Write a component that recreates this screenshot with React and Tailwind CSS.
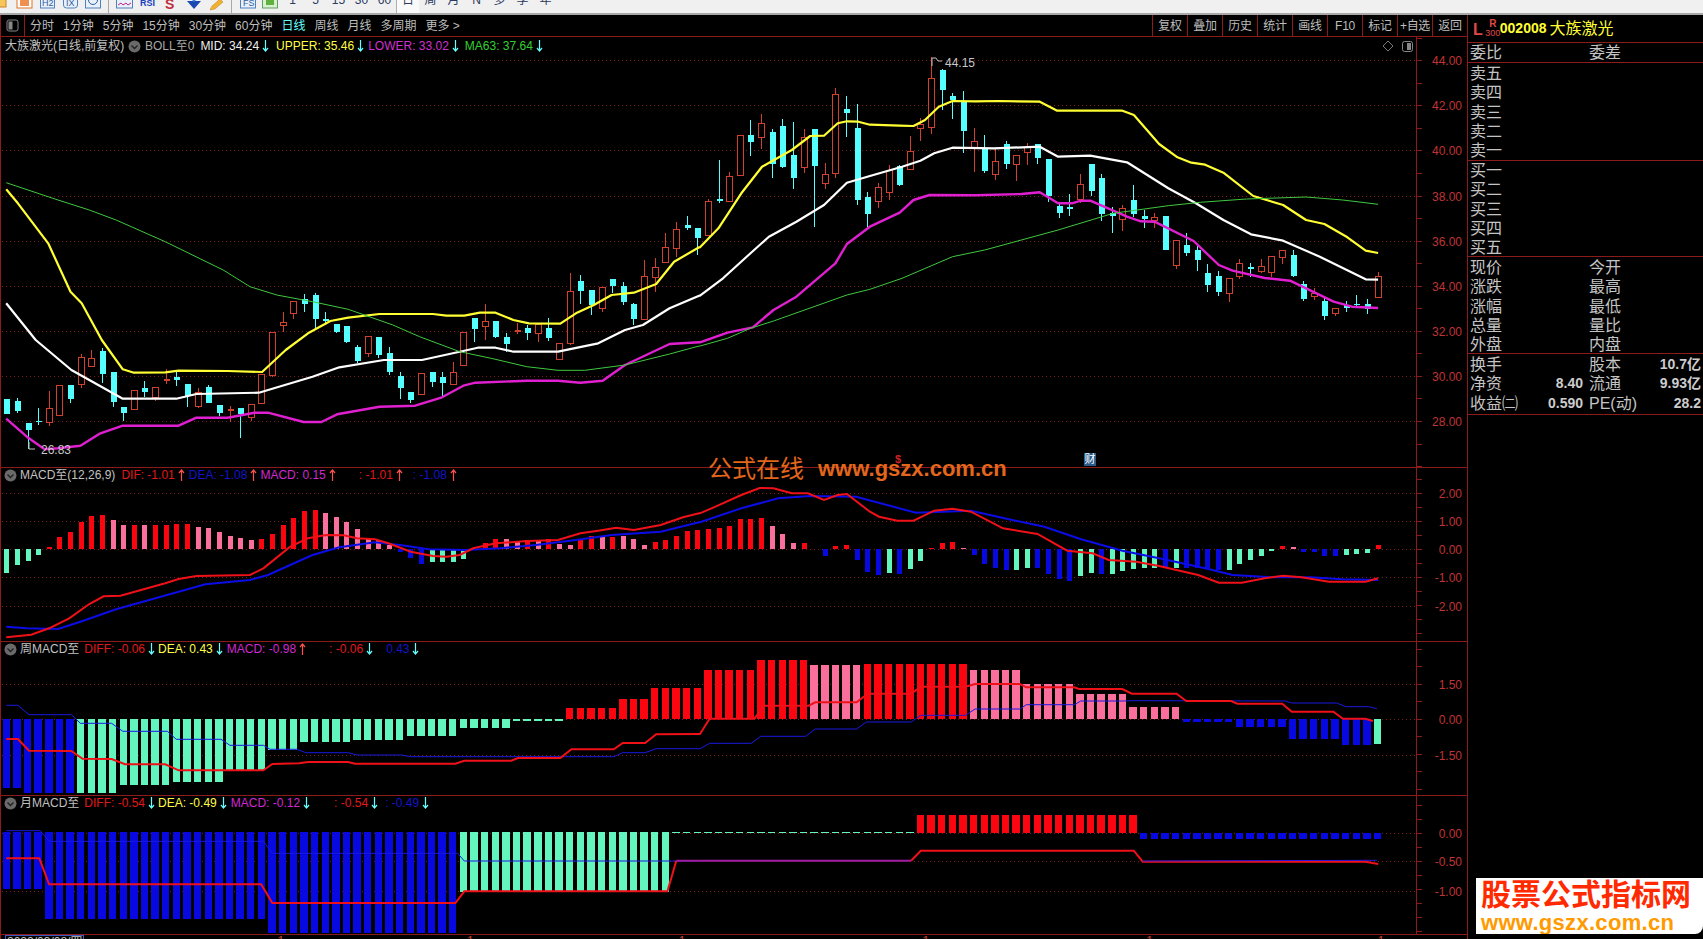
// Stock chart terminal screen. Chart data was read off the screenshot, so most
// numbers are pixels in "zoom" units: x / kx, 40 + y / 3 (main) etc.
const LINE = "#8c1c1c";
const slotX = (i) => 6.3 + 10.63 * i;

const z4x = (x) => x / 2.24;
const z5x = (x) => 700 + x / 2.178;
const z9x = (x) => 700 + x / 1.563;
const pts = (arr, fx, base) => {
  const out = [];
  for (let i = 0; i < arr.length; i += 2) out.push(`${fx(arr[i]).toFixed(1)},${(base + arr[i + 1] / 3).toFixed(1)}`);
  return out.join(" ");
};

// type, wick top, body top, body bottom, wick bottom
const candles = [
  ["c",1077,1077,1122,1122],["c",1075,1083,1112,1118],["c",1150,1150,1169,1228],["c",1105,1143,1147,1155],
  ["r",1053,1105,1145,1158],["r",1036,1036,1124,1124],["c",1036,1036,1076,1088],["r",942,952,1032,1045],
  ["r",930,955,977,977],["c",925,932,1002,1030],["c",996,996,1086,1100],["c",1100,1100,1118,1142],
  ["r",1051,1051,1108,1108],["c",1023,1044,1056,1070],["r",1042,1042,1072,1084],["d",988,1018,1022,1032],
  ["c",995,1012,1019,1038],["c",1033,1033,1068,1100],["r",1045,1056,1097,1105],["c",1036,1042,1088,1088],
  ["c",1095,1095,1118,1128],["d",1098,1108,1112,1145],["c",1105,1105,1122,1193],["r",1093,1093,1132,1143],
  ["r",1003,1003,1090,1090],["r",875,875,1004,1012],["r",816,847,855,875],["r",784,784,820,838],
  ["c",763,778,791,815],["c",760,765,836,870],["c",815,838,843,855],["c",852,852,875,878],
  ["c",858,858,906,908],["c",915,921,963,970],["r",889,889,938,950],["c",892,892,946,955],
  ["c",922,938,995,1005],["c",996,1008,1045,1078],["c",1055,1055,1080,1088],["r",998,998,1063,1063],
  ["c",997,997,1025,1040],["c",995,1011,1029,1068],["r",965,995,1031,1031],["r",877,877,976,976],
  ["c",835,835,866,905],["r",793,844,859,900],["c",843,843,890,895],["c",880,892,911,936],
  ["d",848,871,875,883],["c",855,865,878,900],["r",853,853,880,905],["c",835,865,893,902],
  ["r",910,910,956,956],["r",700,754,908,916],["c",706,724,752,792],["c",750,750,795,825],
  ["r",740,740,805,815],["c",717,717,738,760],["c",727,739,785,795],["c",790,793,836,855],
  ["r",660,709,838,838],["r",655,682,710,755],["r",580,620,665,665],["r",545,568,623,650],
  ["c",528,556,563,570],["c",563,563,595,645],
  ["r",478,483,585,585],["c",360,478,484,490],["r",395,408,482,482],["r",285,285,405,405],
  ["c",240,285,305,348],["r",222,250,292,328],["c",268,276,372,413],["c",238,258,382,385],
  ["c",247,345,413,446],["r",268,292,380,400],["c",267,267,378,560],["r",370,403,428,448],
  ["r",145,163,400,415],["c",168,207,218,290],["c",192,264,480,495],["c",455,472,521,560],
  ["r",430,442,482,505],["r",375,390,455,480],["c",375,378,435,438],["r",288,333,387,390],
  ["r",235,252,265,303],["r",50,115,260,282],["c",88,90,150,210],["c",160,168,180,237],
  ["c",153,185,272,340],["r",265,304,322,395],["c",285,328,393,400],["r",325,364,402,420],
  ["c",303,313,372,387],["r",345,346,373,423],["r",310,320,335,375],["c",313,313,353,372],
  ["c",357,357,468,485],["c",485,498,518,533],["c",462,501,506,528],["r",402,433,476,490],
  ["c",373,373,453,468],["c",403,414,521,543],["c",500,520,527,578],["r",495,505,537,572],
  ["c",435,480,522,530],["c",510,528,538,565],["r",520,532,540,563],["c",528,528,630,630],
  ["r",600,601,675,686],["c",580,615,640,648],["c",618,630,660,693],["c",672,700,735,755],
  ["c",693,708,756,768],["r",715,715,758,785],["r",658,670,707,718],["c",670,680,686,710],
  ["r",657,678,692,698],["r",648,648,695,712],["r",631,631,650,672],["c",630,645,708,710],
  ["c",724,733,777,782],["r",745,758,767,780],["c",775,783,828,840],["r",805,805,820,828],
  ["c",783,795,804,815],["c",765,792,795,800],["c",778,793,808,822],["r",695,708,770,772],
];

const mainLines = [
  ["#ffff33", 2.2,
    [14,448,40,490,108,610,158,755,183,790,228,900,275,988,300,998,370,997,400,992,510,993,587,996,640,930,690,880,740,843,780,833,850,822,970,822,1000,827,1040,827,1075,818,1110,818,1150,840,1185,850,1255,851,1290,820,1330,795,1370,765,1420,758,1470,732,1510,665,1566,622],
    [0,622,40,565,90,460,135,380,200,330,240,288,270,287,300,250,320,244,345,245,370,254,435,257,465,258,490,240,520,200,550,183,600,184,650,183,740,185,778,212,920,212,945,225,1000,312,1040,352,1070,368,1100,374,1140,398,1205,468,1270,495,1320,540,1360,552,1410,592,1450,632,1477,639]],
  ["#ffffff", 2.2,
    [14,790,80,900,160,990,200,1020,275,1076,395,1076,440,1062,580,1058,700,1010,760,982,860,960,945,960,1040,932,1070,923,1110,923,1150,935,1250,935,1340,910,1400,870,1440,855,1500,805,1566,767],
    [0,767,50,715,110,640,150,590,210,545,270,495,320,428,370,408,440,380,480,362,510,340,550,323,640,325,740,320,780,350,850,347,930,367,1020,445,1080,490,1140,540,1200,583,1270,602,1350,650,1450,718,1477,719]],
  ["#e020d0", 2.4,
    [14,1136,60,1190,100,1228,130,1225,180,1217,225,1180,275,1157,400,1157,440,1133,510,1133,570,1118,600,1118,680,1146,720,1146,755,1123,850,1100,930,1097,990,1072,1040,1036,1065,1028,1180,1022,1250,1022,1300,1028,1350,1022,1400,975,1500,912,1566,907],
    [0,907,60,878,115,862,160,810,210,770,295,670,320,612,370,560,435,518,465,480,500,465,600,466,700,462,740,457,780,490,810,490,830,482,850,482,930,530,960,544,990,545,1075,603,1130,675,1160,692,1230,714,1285,722,1320,745,1380,785,1420,800,1477,804]],
  ["#3fc83f", 1,
    [14,428,130,480,200,510,260,540,370,605,500,690,560,740,620,765,700,785,780,808,880,855,940,890,1030,935,1100,955,1180,980,1250,991,1310,991,1400,975,1500,942,1566,918],
    [0,918,60,895,110,865,160,843,320,765,370,748,440,715,550,650,620,630,780,570,900,520,1020,497,1090,487,1190,477,1320,471,1400,480,1477,493]],
];

const BAR = { R: "#fa0510", P: "#fb6f9c", G: "#62f5be", B: "#0808e0" };

const macdBars = (
  "G338 G315 G302 G285 R262 R232 R216 R185 R167 R165 P180 P194 R195 P195 R195 R194 R192 R192 P201 P204 P215 P228 P234 P240 R237 R222 R195 R174 R152 R150 P160 P171 P185 P207 P235 P240 P255 B275 B294 B312 G306 G306 G306 G298 G270 R250 R237 P237 P243 R240 P243 R237 P252 P255 R238 R228 P232 R230 P228 P237 P255 R246 R240 R228 R212 R210 " +
  "R206 R204 R198 R177 R177 R174 P198 P222 P249 R249 P266 B288 R258 R254 B300 B335 B345 G340 B342 G327 G303 R264 R249 R245 P264 B286 B312 B324 B330 G330 G324 B324 B342 B357 B363 G348 G339 B342 G342 G333 G327 G324 G324 B324 G324 B324 B324 B324 B330 G330 G312 G300 G288 G273 R258 P261 B276 B276 B288 B288 G285 G282 G279 R255"
).split(" ");

// colour, how many bars, end of the bar in zoom units (zero line is at 238)
const weekRuns = [
  ["B",2,445],["B",5,458],["G",4,458],["G",5,435],["G",5,425],["G",4,390],["G",3,330],["G",5,305],["G",5,300],["G",5,288],
  ["G",5,264],["G",5,242],["R",5,205],["R",3,177],["R",5,144],["R",5,90],["R",5,60],["P",5,75],["R",5,72],["R",5,72],
  ["P",5,90],["P",5,132],["P",5,162],["P",5,202],["B",5,245],["B",5,262],["B",5,297],["B",3,315],["G",1,312],
];

const monthRuns = [
  ["B",4,575,747],["B",21,575,836],["B",18,575,878],["G",20,575,757],["G",23,576,579],["R",21,525,578],["B",23,578,596],
];

const expand = (runs) => runs.flatMap((r) => Array(r[1]).fill(r));

function Grid({ ys }) {
  return ys.map((y) => (
    <line key={y} x1="2" x2="1416" y1={y} y2={y} stroke="#7a1a1a" strokeDasharray="1 3" shapeRendering="crispEdges" />
  ));
}

function Axis({ top, h, labels, step }) {
  const ticks = [];
  for (let y = labels[0][1] % step; y < top + h; y += step) if (y > top) ticks.push(y);
  return (
    <>
      <line x1="1416.5" x2="1416.5" y1={top} y2={top + h} stroke={LINE} />
      {ticks.map((y) => (
        <line key={y} x1="1417" x2="1422" y1={y} y2={y} stroke={LINE} shapeRendering="crispEdges" />
      ))}
      {labels.map(([t, y]) => (
        <text key={t} x="1462" y={y + 4.5} textAnchor="end" fontSize="12" fill="#c03434">
          {t}
        </text>
      ))}
    </>
  );
}

function Panel({ top, h, children, legend }) {
  return (
    <div className="relative border-b border-[#8c1c1c]">
      <svg width="1466" height={h} viewBox={`1 ${top} 1466 ${h}`} className="block">
        {children}
      </svg>
      {legend}
    </div>
  );
}

function Arrow({ up, className = "" }) {
  return (
    <svg width="7" height="12" viewBox="0 0 7 12" className={`shrink-0 ${className}`}>
      {up ? (
        <path d="M3.5 12V1M1 4l2.5-3L6 4" fill="none" stroke="#ff5050" strokeWidth="1.2" />
      ) : (
        <path d="M3.5 0v11M1 8l2.5 3L6 8" fill="none" stroke="#66ffff" strokeWidth="1.2" />
      )}
    </svg>
  );
}

function Dot() {
  return (
    <svg width="13" height="13" viewBox="0 0 13 13" className="shrink-0">
      <circle cx="6.5" cy="6.5" r="6" fill="#6a6a6a" />
      <path d="M3.5 5.5l3 3 3-3" fill="none" stroke="#222" strokeWidth="1.4" />
    </svg>
  );
}

function Leg({ text, up, className, arrow = "ml-[3px]" }) {
  return (
    <>
      <span className={`whitespace-nowrap ${className}`}>{text}</span>
      <Arrow up={up} className={arrow} />
    </>
  );
}

function MainPanel() {
  return (
    <Panel
      top={37}
      h={430}
      legend={
        <div className="absolute left-[4px] top-[2px] flex h-[14px] items-center text-[12px] text-[#c0c0c0]">
          <span className="whitespace-nowrap w-[123px]">大族激光(日线,前复权)</span>
          <Dot />
          <span className="ml-[4px] whitespace-nowrap text-[#a8a8a8]">BOLL至0</span>
          <Leg text="MID: 34.24" className="ml-[6px] text-[#f0f0f0]" />
          <Leg text="UPPER: 35.46" className="ml-[7px] text-[#ffff44]" />
          <Leg text="LOWER: 33.02" className="ml-[4px] text-[#d030d0]" />
          <Leg text="MA63: 37.64" className="ml-[6px] text-[#33d033]" />
        </div>
      }
    >
      <Grid ys={[60.5, 105.5, 150.5, 196.5, 241.5, 286.5, 331.5, 376.5, 421.5]} />
      <Axis
        top={37}
        h={430}
        step={22.55}
        labels={[["44.00",60.7],["42.00",105.7],["40.00",150.7],["38.00",196],["36.00",241],["34.00",286.7],["32.00",331],["30.00",376],["28.00",421.7]]}
      />
      {candles.map(([t, wt, bt, bb, wb], i) => {
        const x = Math.round(slotX(i)) + 0.5;
        const y = (v) => Math.round(40 + v / 3);
        const col = t === "c" ? "#55ffff" : "#d2402e";
        return (
          <g key={i} shapeRendering="crispEdges">
            <line x1={x} x2={x} y1={y(wt)} y2={y(wb)} stroke={col} />
            <rect
              x={x - 3}
              y={y(bt)}
              width="6"
              height={Math.max(y(bb) - y(bt), 1)}
              fill={t === "c" ? col : t === "d" ? col : "#000"}
              stroke={t === "r" ? col : "none"}
            />
          </g>
        );
      })}
      {mainLines.map(([c, w, a, b]) => (
        <polyline key={c} fill="none" stroke={c} strokeWidth={w} strokeLinejoin="round" points={`${pts(a, z4x, 40)} ${pts(b, z5x, 40)}`} />
      ))}
      <path d="M932 58v8M932 58h4l2 3h4" fill="none" stroke="#c0c0c0" />
      <text x="945" y="67" fontSize="12" fill="#c8c8c8">44.15</text>
      <path d="M29 442v7h6" fill="none" stroke="#c0c0c0" />
      <text x="41" y="454" fontSize="12" fill="#c8c8c8">26.83</text>
      <path d="M1388 41l5 5-5 5-5-5z" fill="none" stroke="#777" />
      <rect x="1402.5" y="41.5" width="10" height="10" rx="2" fill="none" stroke="#888" />
      <rect x="1407" y="43" width="4" height="7" fill="#888" />
    </Panel>
  );
}

function MacdPanel() {
  const y = (v) => 460 + v / 3;
  return (
    <Panel
      top={468}
      h={173}
      legend={
        <div className="absolute left-[3px] top-0 flex h-[14px] items-center text-[12px]">
          <Dot />
          <span className="ml-[3px] whitespace-nowrap text-[#c0c0c0]">MACD至(12,26,9)</span>
          <Leg up text="DIF: -1.01" className="ml-[6px] text-[#e01818]" />
          <Leg up text="DEA: -1.08" className="ml-[4px] text-[#1414c8]" />
          <Leg up text="MACD: 0.15" className="ml-[3px] text-[#d028d0]" />
          <Leg up text=": -1.01" className="ml-[23px] text-[#e01818]" />
          <Leg up text=": -1.08" className="ml-[10px] text-[#1414c8]" />
        </div>
      }
    >
      <Grid ys={[493.5, 521.5, 549.5, 577.5, 606.5]} />
      <Axis top={468} h={173} step={14} labels={[["2.00",493],["1.00",521],["0.00",549.5],["-1.00",577.5],["-2.00",606]]} />
      {macdBars.map((b, i) => {
        const top = y(Math.min(+b.slice(1), 268));
        const bot = y(Math.max(+b.slice(1), 268));
        return <rect key={i} x={Math.round(slotX(i)) - 2} y={top} width="5" height={bot - top} fill={BAR[b[0]]} shapeRendering="crispEdges" />;
      })}
      <polyline fill="none" stroke="#0c0ce6" strokeWidth="2" points={`${pts([14,500,60,505,130,507,180,485,260,448,340,418,460,373,560,360,600,345,700,285,760,262,840,247,900,256,960,268,1040,270,1120,265,1200,255,1290,240,1370,225,1480,215,1566,187], z4x, 460)} ${pts([0,187,90,145,170,115,240,108,340,110,470,158,590,152,680,180,750,200,830,238,920,272,1000,295,1100,325,1160,345,1250,352,1330,352,1400,358,1477,360], z5x, 460)}`} />
      <polyline fill="none" stroke="#f01018" strokeWidth="2" points={`${pts([14,532,70,524,110,505,155,475,200,432,232,409,270,407,370,370,400,357,440,348,560,345,590,325,650,260,690,235,730,225,770,226,800,235,840,238,870,250,920,275,970,288,1000,290,1030,285,1060,265,1110,250,1180,243,1250,240,1300,220,1340,212,1380,203,1420,210,1480,195,1530,172,1566,160], z4x, 460)} ${pts([0,160,30,142,90,105,130,84,160,85,200,100,235,100,270,120,300,105,320,102,370,155,390,170,430,182,465,182,510,152,550,146,590,155,660,205,735,222,800,272,855,280,890,300,950,305,1000,318,1085,345,1130,368,1180,368,1230,355,1270,347,1310,352,1370,365,1450,365,1477,355], z5x, 460)}`} />
    </Panel>
  );
}

function WeekPanel() {
  const y = (v) => 640 + v / 3;
  return (
    <Panel
      top={642}
      h={153}
      legend={
        <div className="absolute left-[3px] top-0 flex h-[14px] items-center text-[12px]">
          <Dot />
          <span className="ml-[3px] whitespace-nowrap text-[#c0c0c0]">周MACD至</span>
          <Leg text="DIFF: -0.06" className="ml-[5px] text-[#e01818]" />
          <Leg text="DEA: 0.43" className="ml-[3px] text-[#ffff44]" />
          <Leg up text="MACD: -0.98" className="ml-[4px] text-[#d028d0]" />
          <Leg text=": -0.06" className="ml-[23px] text-[#e01818]" />
          <Leg text="0.43" className="ml-[13px] text-[#1414c8]" />
        </div>
      }
    >
      <Grid ys={[684.5, 719.5, 755.5]} />
      <Axis top={642} h={153} step={17.5} labels={[["1.50",684],["0.00",719.5],["-1.50",755]]} />
      {expand(weekRuns).map((r, i) => {
        const top = y(Math.min(r[2], 238));
        const bot = y(Math.max(r[2], 238));
        return <rect key={i} x={slotX(i) - 3.7} y={top} width="7.4" height={bot - top} fill={BAR[r[0]]} shapeRendering="crispEdges" />;
      })}
      <polyline fill="none" stroke="#1a1ae0" strokeWidth="1" points={`${pts([14,196,40,196,65,224,160,224,180,250,250,250,275,274,375,274,395,298,495,298,515,316,590,316,605,328,665,328,685,338,780,338,800,345,900,345,920,350,1375,350,1395,338,1445,338,1470,326,1566,326], z4x, 640)} ${pts([0,326,15,310,80,310,95,289,165,289,180,267,245,267,260,246,330,246,345,226,415,226,430,207,500,207,510,194,585,194,595,183,660,183,680,182,915,183,925,189,995,189,1010,200,1045,200,1058,206], z9x, 640)}`} />
      <polyline fill="none" stroke="#f01018" strokeWidth="2" points={`${pts([14,297,40,297,65,332,160,333,185,356,250,357,280,373,370,373,400,391,590,391,610,372,670,370,690,366,780,366,795,371,1020,371,1040,362,1145,362,1160,354,1255,354,1280,328,1375,328,1395,309,1445,309,1470,283,1566,282], z4x, 640)} ${pts([0,282,15,236,85,236,100,197,170,197,180,187,245,187,262,161,330,161,345,140,415,140,430,132,500,132,510,142,585,142,592,147,660,147,675,161,745,161,760,183,830,183,840,191,910,191,925,215,990,215,1005,236,1040,236,1052,243], z9x, 640)}`} />
    </Panel>
  );
}

function MonthPanel() {
  const y = (v) => 640 + v / 3;
  return (
    <Panel
      top={796}
      h={138}
      legend={
        <div className="absolute left-[3px] top-0 flex h-[14px] items-center text-[12px]">
          <Dot />
          <span className="ml-[3px] whitespace-nowrap text-[#c0c0c0]">月MACD至</span>
          <Leg text="DIFF: -0.54" className="ml-[5px] text-[#e01818]" />
          <Leg text="DEA: -0.49" className="ml-[3px] text-[#ffff44]" />
          <Leg text="MACD: -0.12" className="ml-[4px] text-[#d028d0]" />
          <Leg text=": -0.54" className="ml-[24px] text-[#e01818]" />
          <Leg text=": -0.49" className="ml-[7px] text-[#1414c8]" />
        </div>
      }
    >
      <Grid ys={[833.5, 861.5, 891.5]} />
      <Axis top={796} h={138} step={14} labels={[["0.00",833],["-0.50",861],["-1.00",891.7]]} />
      {expand(monthRuns).map((r, i) => (
        <rect key={i} x={slotX(i) - 3.7} y={y(r[2])} width="7.4" height={(r[3] - r[2]) / 3} fill={BAR[r[0]]} shapeRendering="crispEdges" />
      ))}
      <polyline fill="none" stroke="#1a1ae0" strokeWidth="1" points={`${pts([14,572,90,572,110,604,590,604,610,640,1025,640,1040,663,1566,663], z4x, 640)}`} />
      <polyline fill="none" stroke="#f01018" strokeWidth="2" points={`${pts([14,655,88,655,110,733,585,733,610,789,1020,789,1040,754,1495,754,1515,662], z4x, 640)}`} />
      <polyline fill="none" stroke="#a01ca0" strokeWidth="2" points={`${pts([1515,662,1566,662], z4x, 640)} ${pts([0,662,330,662], z9x, 640)}`} />
      <polyline fill="none" stroke="#f01018" strokeWidth="2" points={pts([330,662,345,632,678,632,692,665,1040,665,1060,672], z9x, 640)} />
      <polyline fill="none" stroke="#2a1ae0" strokeWidth="1" points={pts([692,663,1058,661], z9x, 640)} />
    </Panel>
  );
}

const periods = ["分时", "1分钟", "5分钟", "15分钟", "30分钟", "60分钟", "日线", "周线", "月线", "多周期", "更多 >"];
const actions = ["复权", "叠加", "历史", "统计", "画线", "F10", "标记", "+自选", "返回"];

function TabRow() {
  return (
    <div className="flex h-[22px] items-center border-b border-[#8c1c1c] text-[12px] text-[#bdbdbd]">
      <div className="flex h-full w-[24px] items-center justify-center border-r border-[#8c1c1c]">
        <svg width="13" height="13" viewBox="0 0 13 13">
          <rect x="1" y="1" width="11" height="11" rx="2" fill="none" stroke="#888" />
          <rect x="2.5" y="2.5" width="4" height="8" fill="#888" />
        </svg>
      </div>
      <div className="ml-[5px] flex gap-[9px]">
        {periods.map((p) => (
          <span key={p} className={p === "日线" ? "text-[#66ffff]" : ""}>
            {p}
          </span>
        ))}
      </div>
      <div className="ml-auto flex h-full">
        {actions.map((a) => (
          <span key={a} className="flex w-[35px] items-center justify-center whitespace-nowrap border-l border-[#8c1c1c] tracking-[-0.3px]">
            {a}
          </span>
        ))}
      </div>
    </div>
  );
}

function QuoteRow({ a, av, b, bv }) {
  return (
    <div className="flex h-[19.3px] items-center text-[16px] leading-[19px] text-[#c4c4c4]">
      <div className="flex w-[115px] justify-between pl-[2px]">
        <span className="whitespace-nowrap">{a}</span>
        <span className="text-[14px] font-bold text-[#cccccc]">{av}</span>
      </div>
      {b && (
        <div className="ml-[6px] flex w-[112px] justify-between">
          <span className="whitespace-nowrap">{b}</span>
          <span className="text-[14px] font-bold text-[#cccccc]">{bv}</span>
        </div>
      )}
    </div>
  );
}

function SidePanel() {
  return (
    <div className="w-[235px] shrink-0">
      <div className="flex h-[28px] items-center border-b border-[#8c1c1c] pl-[5px]">
        <span className="mt-[3px] text-[16px] font-bold text-[#e04848]">L</span>
        <span className="ml-[4px] flex w-[12px] flex-col items-center leading-none">
          <span className="text-[10px] font-bold text-[#e04848]">R</span>
          <span className="text-[9px] text-[#e04848]">300</span>
        </span>
        <span className="ml-[1px] text-[14px] font-bold text-[#ffff33]">002008</span>
        <span className="ml-[3px] text-[16px] text-[#ffff33]">大族激光</span>
      </div>
      <div className="flex h-[20px] items-center border-b border-[#8c1c1c] pl-[2px] text-[16px] text-[#c4c4c4]">
        <span className="w-[119px]">委比</span>
        <span>委差</span>
      </div>
      <div className="h-[98px] border-b border-[#8c1c1c] pt-px">
        {["卖五", "卖四", "卖三", "卖二", "卖一"].map((t) => <QuoteRow key={t} a={t} />)}
      </div>
      <div className="h-[96px] border-b border-[#8c1c1c]">
        {["买一", "买二", "买三", "买四", "买五"].map((t) => <QuoteRow key={t} a={t} />)}
      </div>
      <div className="h-[97px] border-b border-[#8c1c1c] pt-px">
        <QuoteRow a="现价" b="今开" />
        <QuoteRow a="涨跌" b="最高" />
        <QuoteRow a="涨幅" b="最低" />
        <QuoteRow a="总量" b="量比" />
        <QuoteRow a="外盘" b="内盘" />
      </div>
      <div className="h-[61px] border-b border-[#8c1c1c] pt-px">
        <QuoteRow a="换手" b="股本" bv="10.7亿" />
        <QuoteRow a="净资" av="8.40" b="流通" bv="9.93亿" />
        <QuoteRow a="收益㈡" av="0.590" b="PE(动)" bv="28.2" />
      </div>
    </div>
  );
}

function ToolIcons() {
  return (
    <svg width="281" height="13" viewBox="0 0 281 13" className="shrink-0">
      <rect x="-3" y="-4" width="9" height="11" fill="#f6c65a" stroke="#d08020" />
      <rect x="17" y="-3" width="15" height="11" fill="#fff" stroke="#e07020" />
      <rect x="20" y="0" width="9" height="6" fill="#f09050" />
      <rect x="40.5" y="-3" width="14" height="11" fill="#e8f0fa" stroke="#5080c0" />
      <text x="42" y="6" fontSize="9" fill="#3060a0">H2</text>
      <rect x="63.5" y="-3" width="14" height="11" rx="3" fill="#e8f0fa" stroke="#5080c0" />
      <text x="66" y="6" fontSize="9" fill="#3060a0">IX</text>
      <rect x="85.5" y="-3" width="15" height="11" fill="#e8f0fa" stroke="#5080c0" />
      <circle cx="93" cy="0" r="4.5" fill="none" stroke="#3060a0" />
      <line x1="108.5" x2="108.5" y1="0" y2="13" stroke="#a8a8a8" />
      <rect x="116.5" y="-3" width="16" height="11" fill="#e8f0fa" stroke="#5080c0" />
      <path d="M118 5l3-2 2 2 3-2 2 2 3-2" fill="none" stroke="#d02090" />
      <text x="140" y="6" fontSize="9" fontWeight="bold" fill="#1840c0">RSI</text>
      <text x="165" y="9" fontSize="14" fontWeight="bold" fill="#c03040">S</text>
      <path d="M187 1h14l-7 8z" fill="#1848b0" />
      <path d="M190-2h8l-4 4z" fill="#4080e0" />
      <path d="M210 10l2-4 8-7 3 3-8 7z" fill="#f0b030" stroke="#c08020" strokeWidth="0.5" />
      <line x1="231.5" x2="231.5" y1="0" y2="13" stroke="#a8a8a8" />
      <rect x="240.5" y="-3" width="15" height="11" fill="#e8f0fa" stroke="#5080c0" />
      <text x="243" y="6" fontSize="9" fill="#3060a0">FS</text>
      <rect x="262.5" y="-3" width="15" height="11" fill="#d8f0d0" stroke="#60a060" />
      <rect x="266" y="-1" width="8" height="6" fill="#60b040" />
    </svg>
  );
}

function TopBar() {
  const items = ["1", "5", "15", "30", "60", "日", "周", "月", "N", "多", "季", "年"];
  return (
    <div className="h-[15px] overflow-hidden border-b-2 border-[#a8a8a8] bg-[#f0f0f0]">
      <div className="flex h-[13px]">
        <ToolIcons />
        {items.map((t) => (
          <span
            key={t}
            className={`flex h-[13px] w-[23px] justify-center text-[12px] leading-[12px] text-[#2a3a60] ${t === "日" ? "border-l border-[#b0b0b0] bg-[#fafafa]" : ""}`}
          >
            <span className="-translate-y-[6px]">{t}</span>
          </span>
        ))}
      </div>
    </div>
  );
}

function DateRow() {
  return (
    <div className="flex h-[10px] items-start pl-[4px] text-[12px] leading-[12px] text-[#c0c0c0]">
      <span className="border border-[#3a5ac0] px-[1px] whitespace-nowrap">2022/03/08/四</span>
      <span className="ml-[193px] text-[#d04030]">1</span>
      <span className="ml-[183px] text-[#d04030]">1</span>
      <span className="ml-[205px] text-[#d04030]">1</span>
      <span className="ml-[237px] text-[#d04030]">1</span>
      <span className="ml-[217px] text-[#d04030]">1</span>
      <span className="ml-[225px] text-[#d04030]">1</span>
    </div>
  );
}

export default function App() {
  return (
    <div className="relative h-[939px] w-[1703px] overflow-hidden bg-black [font-family:'Liberation_Sans','Noto_Sans_CJK_SC',sans-serif]">
      <TopBar />
      <div className="flex">
        <div className="w-[1468px] shrink-0 border-x border-x-[#8c1c1c]">
          <TabRow />
          <MainPanel />
          <MacdPanel />
          <WeekPanel />
          <MonthPanel />
          <DateRow />
        </div>
        <SidePanel />
      </div>

      {/* stamps over the chart */}
      <div className="absolute left-[708px] top-[456px] flex items-center whitespace-nowrap text-[#e2661c]">
        <span className="text-[24px] leading-[26px]">公式在线</span>
        <span className="ml-[14px] text-[22px] font-bold leading-[26px]">www.gszx.com.cn</span>
      </div>
      <span className="absolute left-[895px] top-[453px] text-[11px] font-bold leading-[12px] text-[#d02020]">$</span>
      <span className="absolute left-[1084px] top-[453px] flex h-[13px] w-[12px] items-center justify-center bg-[#2a5a8a] text-[11px] text-white">财</span>
      <div className="absolute left-[1476px] top-[878px] flex h-[56px] w-[227px] flex-col overflow-hidden rounded-br-lg bg-white pl-[5px]">
        <span className="whitespace-nowrap text-[30px] font-bold leading-[34px] text-[#ff2a00]">股票公式指标网</span>
        <span className="whitespace-nowrap text-[22px] font-bold leading-[22px] tracking-[0.3px] text-[#ff9a00]">www.gszx.com.cn</span>
      </div>
    </div>
  );
}
